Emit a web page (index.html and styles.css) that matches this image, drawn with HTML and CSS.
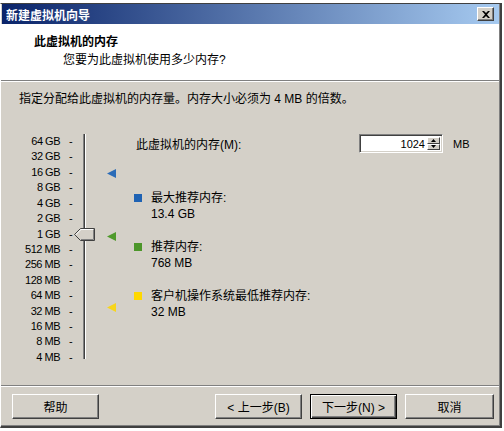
FILE: index.html
```html
<!DOCTYPE html>
<html lang="zh-CN">
<head>
    <meta charset="UTF-8">
    <title>新建虚拟机向导</title>
    <link rel="stylesheet" href="styles.css">
</head>
<body>

    <div class="window">
        <!-- Title Bar -->
        <div class="titlebar">
            <span class="title">新建虚拟机向导</span>
            <button class="close-btn">
                <svg width="8" height="7" viewBox="0 0 8 7"><path d="M0 0h2l2 2 2-2h2L5 3.5 8 7H6L4 5 2 7H0l3-3.5z" fill="#000"/></svg>
            </button>
        </div>

        <!-- Page Header -->
        <div class="header">
            <div class="header-title">此虚拟机的内存</div>
            <div class="header-sub">您要为此虚拟机使用多少内存?</div>
        </div>

        <div class="content">
            <div class="intro">指定分配给此虚拟机的内存量。内存大小必须为 4 MB 的倍数。</div>

            <div class="memory">
                <ul class="scale">
                    <li><span>64 GB</span><span class="tick">-</span></li>
                    <li><span>32 GB</span><span class="tick">-</span></li>
                    <li><span>16 GB</span><span class="tick">-</span></li>
                    <li><span>8 GB</span><span class="tick">-</span></li>
                    <li><span>4 GB</span><span class="tick">-</span></li>
                    <li><span>2 GB</span><span class="tick">-</span></li>
                    <li><span>1 GB</span><span class="tick">-</span></li>
                    <li><span>512 MB</span><span class="tick">-</span></li>
                    <li><span>256 MB</span><span class="tick">-</span></li>
                    <li><span>128 MB</span><span class="tick">-</span></li>
                    <li><span>64 MB</span><span class="tick">-</span></li>
                    <li><span>32 MB</span><span class="tick">-</span></li>
                    <li><span>16 MB</span><span class="tick">-</span></li>
                    <li><span>8 MB</span><span class="tick">-</span></li>
                    <li><span>4 MB</span><span class="tick">-</span></li>
                </ul>

                <div class="slider">
                    <div class="track"></div>
                    <svg class="thumb" width="21" height="13" viewBox="0 0 21 13">
                        <path d="M0.5 6.5 L6.5 0.5 H20.5 V12.5 H6.5 Z" fill="#d4d0c8" stroke="#404040"/>
                        <path d="M1.9 6.5 L7 1.5 H19.5" fill="none" stroke="#fff"/>
                        <path d="M7 11.5 H19.5 V1.5" fill="none" stroke="#808080"/>
                    </svg>
                    <svg class="marker marker-max" width="9" height="9" viewBox="0 0 9 9"><path d="M0 4.5 L9 0 V9 Z" fill="#2b6cb8"/></svg>
                    <svg class="marker marker-rec" width="9" height="9" viewBox="0 0 9 9"><path d="M0 4.5 L9 0 V9 Z" fill="#4f9a2c"/></svg>
                    <svg class="marker marker-min" width="9" height="9" viewBox="0 0 9 9"><path d="M0 4.5 L9 0 V9 Z" fill="#f7d51c"/></svg>
                </div>

                <div class="details">
                    <div class="amount-row">
                        <label class="amount-label">此虚拟机的内存(M):</label>
                        <div class="spinner">
                            <input class="spin-input" type="text" value="1024">
                            <div class="spin-btns">
                                <span class="spin-btn"><svg width="5" height="3" viewBox="0 0 5 3"><path d="M2.5 0 L5 3 H0 Z" fill="#000"/></svg></span>
                                <span class="spin-btn"><svg width="5" height="3" viewBox="0 0 5 3"><path d="M0 0 H5 L2.5 3 Z" fill="#000"/></svg></span>
                            </div>
                        </div>
                        <span class="unit">MB</span>
                    </div>

                    <div class="legend">
                        <div class="legend-item">
                            <span class="swatch swatch-max"></span>
                            <div>最大推荐内存:<br>13.4 GB</div>
                        </div>
                        <div class="legend-item">
                            <span class="swatch swatch-rec"></span>
                            <div>推荐内存:<br>768 MB</div>
                        </div>
                        <div class="legend-item">
                            <span class="swatch swatch-min"></span>
                            <div>客户机操作系统最低推荐内存:<br>32 MB</div>
                        </div>
                    </div>
                </div>
            </div>
        </div>

        <!-- Buttons -->
        <div class="footer">
            <button class="btn">帮助</button>
            <div class="nav-btns">
                <button class="btn">&lt; 上一步(B)</button>
                <button class="btn btn-default">下一步(N) &gt;</button>
                <button class="btn btn-cancel">取消</button>
            </div>
        </div>
    </div>

</body>
</html>
```

FILE: styles.css
```css
/* Basic Reset */
* {
    margin: 0;
    padding: 0;
    box-sizing: border-box;
}

body {
    font-family: "Liberation Sans", "Noto Sans CJK SC", sans-serif;
    font-size: 12px;
    color: #000;
    background: #ffffff;
    padding-top: 3px;
}

/* Window Frame */
.window {
    width: 502px;
    height: 425px;
    background: #d4d0c8;
    border-top: 1px solid #404040;
    border-left: 1px solid #ffffff;
    border-right: 2px solid #404040;
    border-bottom: 2px solid #404040;
    box-shadow: inset -1px -1px #808080;
    display: flex;
    flex-direction: column;
}

/* Title Bar */
.titlebar {
    height: 20px;
    margin: 0 1px;
    padding: 0 4px;
    display: flex;
    align-items: center;
    justify-content: space-between;
    background: linear-gradient(to right, #0a246a, #a6caf0);
}

.title {
    color: #fff;
    font-weight: bold;
    font-family: "Noto Sans CJK SC", sans-serif;
    font-size: 12px;
}

.close-btn {
    width: 17px;
    height: 14px;
    background: #d4d0c8;
    border: 1px solid;
    border-color: #fff #404040 #404040 #fff;
    box-shadow: inset -1px -1px #808080;
    display: flex;
    align-items: center;
    justify-content: center;
    margin-right: 1px;
}

/* Page Header */
.header {
    height: 57px;
    background: #fff;
    border-bottom: 1px solid #808080;
    box-shadow: 0 1px #fff;
    padding: 8px 0 0 33px;
    margin-right: 1px;
}

.header-title {
    font-family: "Noto Sans CJK SC", sans-serif;
    font-weight: bold;
    line-height: 17px;
}

.header-sub {
    padding-left: 29px;
    margin-top: 3px;
    line-height: 17px;
}

/* Content */
.content {
    flex: 1;
    padding: 10px 0 0 18px;
}

.intro {
    line-height: 16px;
}

.memory {
    display: flex;
    margin: 27px 0 0 -18px;
}

.scale {
    list-style: none;
    width: 73px;
    font-size: 11px;
    letter-spacing: -0.5px;
}

.scale li {
    height: 15.43px;
    line-height: 15.43px;
    display: grid;
    grid-template-columns: 59px 1fr;
}

.scale li span:first-child {
    text-align: right;
}

.tick {
    padding-left: 9px;
}

.slider {
    position: relative;
    width: 60px;
}

.track {
    position: absolute;
    left: 9px;
    top: 0;
    width: 3px;
    height: 225px;
    border-left: 1px solid #808080;
    border-right: 1px solid #fff;
    background: #404040;
}

.thumb {
    position: absolute;
    left: 0;
    top: 94px;
}

.marker {
    position: absolute;
    left: 33px;
}

.marker-max { top: 35px; }
.marker-rec { top: 98px; }
.marker-min { top: 169px; }

/* Right Side Details */
.details {
    flex: 1;
}

.amount-row {
    display: flex;
    align-items: center;
    height: 23px;
    margin-top: -3px;
    padding-top: 2px;
}

.amount-label {
    padding-left: 2px;
    width: 225px;
}

.spinner {
    display: flex;
    width: 84px;
    height: 19px;
    background: #fff;
    border: 1px solid;
    border-color: #808080 #fff #fff #808080;
    box-shadow: inset 1px 1px #404040, inset -1px -1px #d4d0c8;
    padding: 2px;
}

.spin-input {
    flex: 1;
    min-width: 0;
    border: none;
    outline: none;
    text-align: right;
    font: 11px "Liberation Sans", sans-serif;
    padding-right: 2px;
    background: transparent;
}

.spin-btns {
    width: 13px;
    display: flex;
    flex-direction: column;
}

.spin-btn {
    flex: 1;
    background: #d4d0c8;
    border: 1px solid;
    border-color: #fff #404040 #404040 #fff;
    display: flex;
    align-items: center;
    justify-content: center;
}

.unit {
    margin-left: 10px;
    font-size: 11px;
}

.legend {
    margin-top: 36px;
    display: flex;
    flex-direction: column;
    gap: 17px;
}

.legend-item {
    display: grid;
    grid-template-columns: 17px 1fr;
    line-height: 16px;
}

.swatch {
    width: 8px;
    height: 8px;
    margin-top: 4px;
}

.swatch-max { background: #1e62b3; }
.swatch-rec { background: #4c962a; }
.swatch-min { background: #ffd800; }

/* Footer Buttons */
.footer {
    height: 41px;
    margin: 0 1px 0 0;
    border-top: 1px solid #808080;
    box-shadow: inset 0 1px #fff;
    display: flex;
    justify-content: space-between;
    padding: 8px 5px 0 11px;
}

.nav-btns {
    display: flex;
    gap: 8px;
}

.btn {
    width: 87px;
    height: 25px;
    font: 12px "Liberation Sans", "Noto Sans CJK SC", sans-serif;
    color: #000;
    background: #d4d0c8;
    border: 1px solid;
    border-color: #fff #404040 #404040 #fff;
    box-shadow: inset -1px -1px #808080;
}

.btn-default {
    border: 1px solid #000;
    box-shadow: inset 1px 1px #fff, inset -1px -1px #404040, inset -2px -2px #808080;
}

.btn-cancel {
    width: 89px;
}
```
